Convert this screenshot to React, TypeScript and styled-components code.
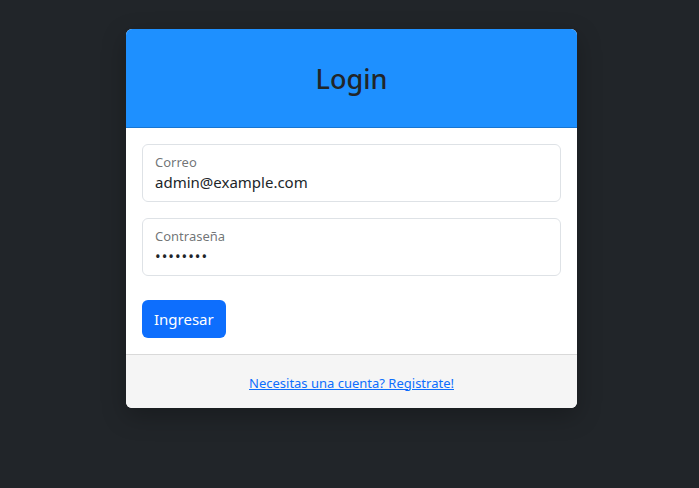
import React from "react";
import styled, { createGlobalStyle } from "styled-components";

const Global = createGlobalStyle`
  html, body { margin: 0; padding: 0; background: #212529; }
  body { font-family: "Noto Sans", "Segoe UI", sans-serif; color: #212529; }
  * { box-sizing: border-box; }
`;

const Page = styled.div`
  min-height: 488px;
  display: flex;
  justify-content: center;
  padding-top: 29px;
  padding-left: 4px;
`;

const Card = styled.div`
  width: 451px;
  background: #fff;
  border-radius: 6px;
  overflow: hidden;
  box-shadow: 0 8px 24px rgba(0, 0, 0, 0.25);
  display: flex;
  flex-direction: column;
  align-self: flex-start;
`;

const Header = styled.div`
  height: 99px;
  background: #1e90ff;
  border-bottom: 1px solid rgba(0, 0, 0, 0.175);
  display: flex;
  align-items: center;
  justify-content: center;
  padding-top: 2px;
`;

const Title = styled.h2`
  margin: 0;
  font-size: 27px;
  font-weight: 500;
  color: #212529;
  line-height: 1.2;
`;

const Body = styled.form`
  padding: 16px;
  display: flex;
  flex-direction: column;
  gap: 16px;
`;

const Field = styled.div`
  height: 58px;
  border: 1px solid #dee2e6;
  border-radius: 6px;
  padding: 7px 12px 0;
  display: flex;
  flex-direction: column;
`;

const Label = styled.label`
  font-size: 13px;
  line-height: 18px;
  color: rgba(33, 37, 41, 0.65);
  margin-top: 1px;
`;

const Input = styled.input<{ $password?: boolean }>`
  border: none;
  outline: none;
  padding: 0;
  font-family: inherit;
  font-size: 15px;
  line-height: 22px;
  color: #212529;
  background: transparent;
  letter-spacing: ${(p) => (p.$password ? "1px" : "0")};
`;

const Actions = styled.div`
  padding-top: 8px;
`;

const Button = styled.button`
  height: 38px;
  padding: 0 12px;
  border: none;
  border-radius: 6px;
  background: #0d6efd;
  color: #fff;
  font-family: inherit;
  font-size: 15px;
`;

const Footer = styled.div`
  height: 54px;
  background: #f5f5f5;
  border-top: 1px solid #d9d9d9;
  display: flex;
  align-items: center;
  justify-content: center;
`;

const Link = styled.a`
  color: #0d6efd;
  font-size: 13px;
  text-decoration: underline;
  margin-top: 2px;
`;

export default function App() {
  return (
    <>
      <Global />
      <Page>
        <Card>
          <Header>
            <Title>Login</Title>
          </Header>
          <Body onSubmit={(e) => e.preventDefault()}>
            <Field>
              <Label>Correo</Label>
              <Input type="email" defaultValue="admin@example.com" />
            </Field>
            <Field>
              <Label>Contraseña</Label>
              <Input $password type="password" defaultValue="admin123" />
            </Field>
            <Actions>
              <Button type="submit">Ingresar</Button>
            </Actions>
          </Body>
          <Footer>
            <Link href="#">Necesitas una cuenta? Registrate!</Link>
          </Footer>
        </Card>
      </Page>
    </>
  );
}
